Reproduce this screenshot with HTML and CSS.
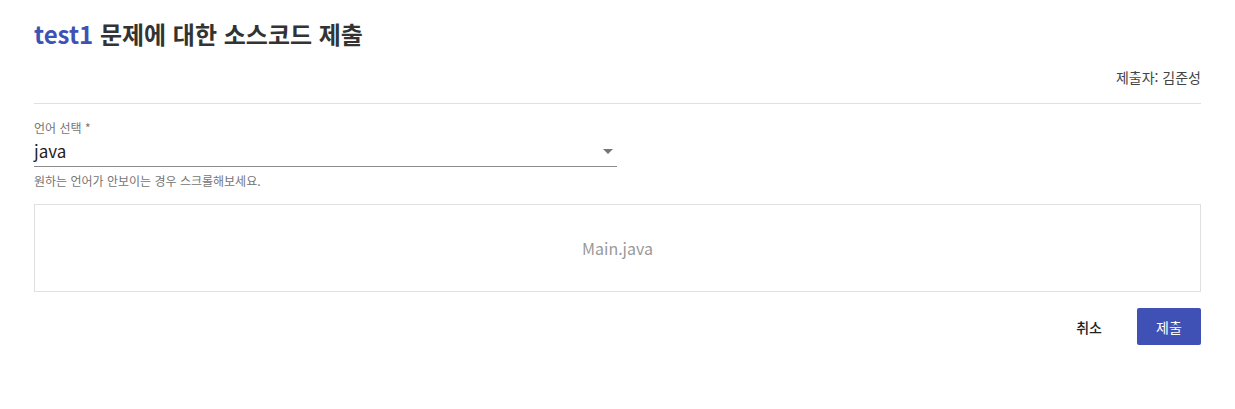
FILE: index.html
```html
<!DOCTYPE html>
<html lang="ko">
<head>
<meta charset="utf-8">
<link rel="stylesheet" href="styles.css">
</head>
<body>
<div class="page">
  <h1 class="title"><span class="accent">test1</span> 문제에 대한 소스코드 제출</h1>
  <div class="submitter">제출자: 김준성</div>
  <hr class="divider">
  <div class="field">
    <label class="label">언어 선택 *</label>
    <div class="select">
      <span class="value">java</span>
      <svg class="arrow" width="10" height="5" viewBox="0 0 10 5"><path d="M0 0h10L5 5z" fill="#757575"/></svg>
    </div>
    <div class="helper">원하는 언어가 안보이는 경우 스크롤해보세요.</div>
  </div>
  <div class="dropzone">Main.java</div>
  <div class="actions">
    <button class="btn btn-text">취소</button>
    <button class="btn btn-primary">제출</button>
  </div>
</div>
</body>
</html>
```

FILE: styles.css
```css
* { box-sizing: border-box; }
body {
  margin: 0;
  background: #fff;
  font-family: "Noto Sans CJK KR", "Noto Sans", sans-serif;
  color: #333;
}
.page {
  padding: 16px 34px;
  display: flex;
  flex-direction: column;
}
.title {
  margin: 0;
  font-size: 24px;
  font-weight: 700;
  line-height: 36px;
  color: #333;
}
.accent { color: #3f51b5; }
.submitter {
  align-self: flex-end;
  margin-top: 15px;
  font-size: 14px;
  line-height: 20px;
  color: #444;
}
.divider {
  margin: 16px 0 0;
  border: 0;
  border-top: 1px solid #e0e0e0;
}
.field {
  margin-top: 15px;
  width: 583px;
  display: flex;
  flex-direction: column;
}
.label {
  font-size: 12px;
  line-height: 18px;
  color: #757575;
}
.select {
  display: flex;
  align-items: flex-start;
  justify-content: space-between;
  height: 30px;
  padding-top: 2px;
  border-bottom: 1px solid #8a8a8a;
  padding-right: 4px;
}
.value {
  font-size: 17px;
  color: #222;
  line-height: 24px;
}
.arrow {
  margin-top: 10px;
}
.helper {
  margin-top: 5px;
  font-size: 12px;
  line-height: 18px;
  color: #757575;
}
.dropzone {
  margin-top: 14px;
  height: 88px;
  border: 1px solid #e0e0e0;
  display: flex;
  align-items: center;
  justify-content: center;
  font-size: 16px;
  color: #999;
}
.actions {
  margin-top: 16px;
  display: flex;
  justify-content: flex-end;
  gap: 8px;
}
.btn {
  font-family: inherit;
  font-size: 14px;
  border: 0;
  height: 37px;
  cursor: pointer;
}
.btn-text {
  background: transparent;
  color: #222;
  font-weight: 500;
  padding: 0 27px 0 16px;
}
.btn-primary {
  background: #3f51b5;
  color: #fff;
  width: 64px;
  padding: 0;
  border-radius: 2px;
}
```
